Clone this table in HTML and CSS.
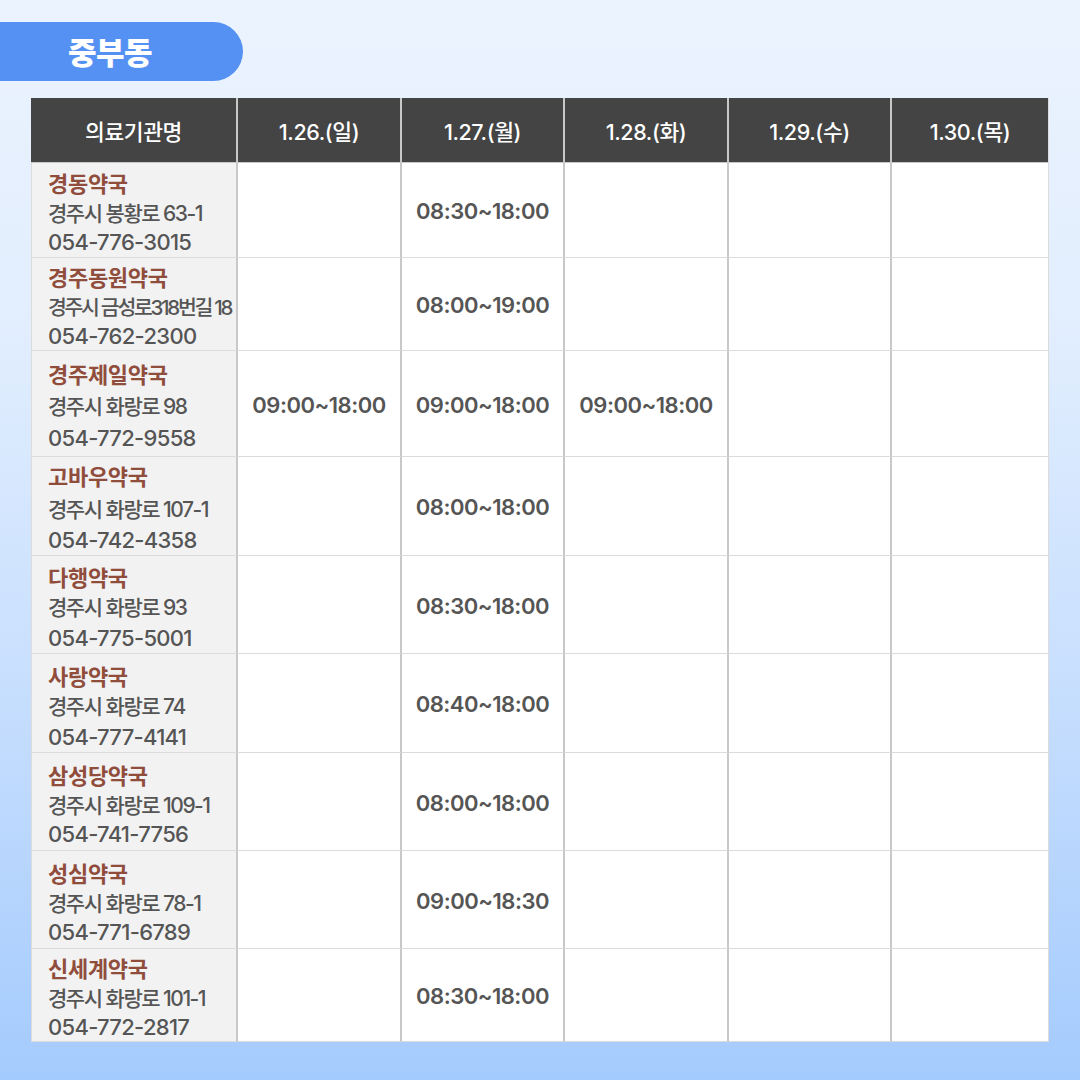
FILE: index.html
```html
<!DOCTYPE html>
<html lang="ko">
<head>
<meta charset="utf-8">
<link rel="stylesheet" href="styles.css">
</head>
<body>
<div class="page">
  <div class="tab">중부동</div>
  <div class="table">
    <div class="th">의료기관명</div>
    <div class="th">1.26.(일)</div>
    <div class="th">1.27.(월)</div>
    <div class="th">1.28.(화)</div>
    <div class="th">1.29.(수)</div>
    <div class="th last">1.30.(목)</div>

    <div class="name"><b>경동약국</b><span>경주시 봉황로 63-1</span><i>054-776-3015</i></div>
    <div class="td"></div><div class="td">08:30~18:00</div><div class="td"></div><div class="td"></div><div class="td last"></div>

    <div class="name"><b>경주동원약국</b><span class="tight">경주시 금성로318번길 18</span><i>054-762-2300</i></div>
    <div class="td"></div><div class="td">08:00~19:00</div><div class="td"></div><div class="td"></div><div class="td last"></div>

    <div class="name loose"><b>경주제일약국</b><span>경주시 화랑로 98</span><i>054-772-9558</i></div>
    <div class="td">09:00~18:00</div><div class="td">09:00~18:00</div><div class="td">09:00~18:00</div><div class="td"></div><div class="td last"></div>

    <div class="name loose"><b>고바우약국</b><span>경주시 화랑로 107-1</span><i>054-742-4358</i></div>
    <div class="td"></div><div class="td">08:00~18:00</div><div class="td"></div><div class="td"></div><div class="td last"></div>

    <div class="name mid"><b>다행약국</b><span>경주시 화랑로 93</span><i>054-775-5001</i></div>
    <div class="td"></div><div class="td">08:30~18:00</div><div class="td"></div><div class="td"></div><div class="td last"></div>

    <div class="name mid"><b>사랑약국</b><span>경주시 화랑로 74</span><i>054-777-4141</i></div>
    <div class="td"></div><div class="td">08:40~18:00</div><div class="td"></div><div class="td"></div><div class="td last"></div>

    <div class="name"><b>삼성당약국</b><span>경주시 화랑로 109-1</span><i>054-741-7756</i></div>
    <div class="td"></div><div class="td">08:00~18:00</div><div class="td"></div><div class="td"></div><div class="td last"></div>

    <div class="name"><b>성심약국</b><span>경주시 화랑로 78-1</span><i>054-771-6789</i></div>
    <div class="td"></div><div class="td">09:00~18:30</div><div class="td"></div><div class="td"></div><div class="td last"></div>

    <div class="name"><b>신세계약국</b><span>경주시 화랑로 101-1</span><i>054-772-2817</i></div>
    <div class="td"></div><div class="td">08:30~18:00</div><div class="td"></div><div class="td"></div><div class="td last"></div>
  </div>
</div>
</body>
</html>
```

FILE: styles.css
```css
* { box-sizing: border-box; }
html, body { margin: 0; padding: 0; }
body {
  width: 1080px;
  height: 1080px;
  overflow: hidden;
  font-family: Inter, "Noto Sans CJK KR", sans-serif;
  background: linear-gradient(180deg, #ebf3fe 0%, #e2eefe 30%, #c6defe 65%, #a4cbfd 100%);
}
.page {
  padding-top: 22px;
  display: flex;
  flex-direction: column;
}
.tab {
  width: 243px;
  height: 59px;
  background: #5591f2;
  border-radius: 0 30px 30px 0;
  color: #fff;
  font-weight: 900;
  font-size: 31px;
  letter-spacing: -0.5px;
  display: flex;
  align-items: center;
  justify-content: center;
  padding-right: 23px;
  padding-bottom: 2px;
}
.table {
  margin: 17px 0 0 31px;
  width: 1018px;
  display: grid;
  grid-template-columns: 206px 164px 163px 164px 163px 1fr;
  grid-template-rows: 65px 95px 93px 106px 99px 98px 99px 98px 98px 93px;
  border-left: 1px solid #dcdcdc;
  border-right: 1px solid #dcdcdc;
  background: #fff;
}
.th {
  background: #444444;
  color: #fff;
  font-size: 21.5px;
  font-weight: 500;
  letter-spacing: -0.4px;
  display: flex;
  align-items: center;
  justify-content: center;
  border-right: 2px solid #c8c8c8;
  border-bottom: 1px solid #c8c8c8;
}
.th:first-child { margin-left: -1px; }
.th.last, .td.last { border-right: none; }
.td {
  border-right: 2px solid #c8c8c8;
  border-bottom: 1px solid #dcdcdc;
  display: flex;
  align-items: center;
  justify-content: center;
  color: #555;
  font-size: 22px;
  font-weight: 600;
  letter-spacing: -0.5px;
  padding-top: 2px;
}
.name {
  background: #f2f2f2;
  border-right: 2px solid #c8c8c8;
  border-bottom: 1px solid #dcdcdc;
  display: flex;
  flex-direction: column;
  justify-content: center;
  padding-left: 16px;
  padding-top: 7px;
  line-height: 29px;
  color: #555;
  white-space: nowrap;
}
.name.loose { line-height: 31.5px; }
.name.mid { line-height: 30px; }
.name b {
  color: #904d3c;
  font-weight: 700;
  font-size: 22px;
  letter-spacing: -0.3px;
}
.name span {
  font-weight: 500;
  font-size: 21px;
  letter-spacing: -1.5px;
}
.name i {
  font-style: normal;
  font-weight: 500;
  font-size: 22px;
  letter-spacing: -0.7px;
}
.name .tight { letter-spacing: -2.3px; font-size: 20.5px; }
```
